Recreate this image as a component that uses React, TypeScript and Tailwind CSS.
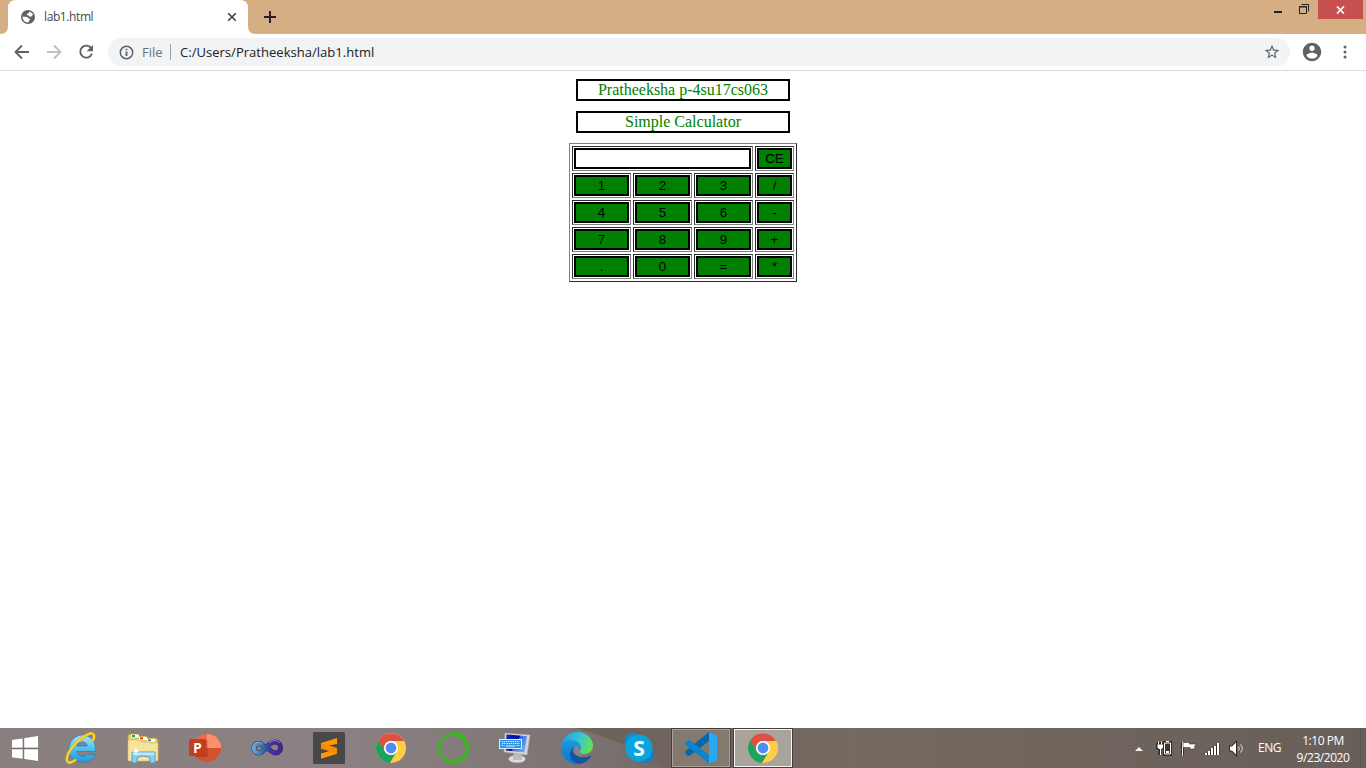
import type { ReactNode } from "react";

const ui = "font-['Open_Sans','Noto_Sans',sans-serif]";

function TabStrip() {
  return (
    <div className="flex h-[34px] items-end bg-[#d5af83]">
      <svg width="256" height="34" viewBox="0 0 256 34" className="absolute top-0 left-0">
        <path d="M0 34Q8 34 8 26V8Q8 0 16 0H240Q248 0 248 8V26Q248 34 256 34Z" fill="#fff" />
      </svg>
      <div className="relative flex h-[34px] w-[248px] items-center pl-[20px]">
        <svg width="16" height="16" viewBox="0 0 16 16">
          <circle cx="8" cy="8" r="7" fill="#5f6368" />
          <path d="M9 2.400Q12 3 13.300 5.800L12.300 6.300Q11.500 8 9.800 7.800Q9.200 6.200 7.500 6.300Q6.200 5.500 7.200 4.500L9 4.200Z" fill="#fff" />
          <path d="M2.400 7.800H5.500Q8.500 7.800 8.500 9.500Q10.500 9.500 10.300 11Q8.800 11 8.500 13.400Q3 13.800 2.400 7.800Z" fill="#fff" />
        </svg>
        <span className={`${ui} ml-[8px] w-[183px] text-[12px] leading-4 tracking-[-0.4px] text-[#45484c]`}>lab1.html</span>
        <svg width="12" height="12" viewBox="0 0 12 12" className="-ml-px" stroke="#3c4043" strokeWidth="1.600">
          <path d="M2.200 2.200l7.600 7.600M9.800 2.200l-7.600 7.600" />
        </svg>
      </div>
      <div className="relative flex h-[34px] w-[44px] items-center justify-center">
        <svg width="14" height="14" viewBox="0 0 14 14" stroke="#202124" strokeWidth="2">
          <path d="M7 1v12M1 7h12" />
        </svg>
      </div>
      <div className="ml-auto flex h-[34px] items-start pr-[3px]">
        <svg width="50" height="20" viewBox="0 0 50 20" fill="none" stroke="#222">
          <path d="M6 12h8" strokeWidth="2" />
          <path d="M31.500 6.500h7v7h-7zM31 7h8M33.500 4.500h7v7" strokeWidth="1" />
        </svg>
        <div className="flex h-[19px] w-[45px] items-center justify-center bg-[#c75050]">
          <svg width="9" height="8" viewBox="0 0 9 8" stroke="#fff" strokeWidth="1.700">
            <path d="M1 .5l7 7M8 .5l-7 7" />
          </svg>
        </div>
      </div>
    </div>
  );
}

function Toolbar() {
  return (
    <div className="flex h-[37px] items-center border-b border-[#dadce0] bg-white">
      <svg width="108" height="36" viewBox="0 0 108 36" fill="none" strokeWidth="1.900">
        <path d="M29 18H16M22 11.500L15.500 18l6.500 6.500" stroke="#5f6368" />
        <path d="M47 18h13M54 11.500l6.500 6.500-6.500 6.500" stroke="#bdc1c6" />
        <path d="M91.200 14.200A6 6 0 1 0 91.900 19.700" stroke="#5f6368" />
        <path d="M93 11v6.300h-6.300z" fill="#5f6368" />
      </svg>
      <div className={`${ui} flex h-7 w-[1182px] items-center rounded-full bg-[#f1f3f4] pl-[11px] text-[13px] text-[#202124]`}>
        <svg width="15" height="15" viewBox="0 0 15 15" fill="none" stroke="#5f6368" strokeWidth="1.500">
          <circle cx="7.500" cy="7.500" r="6.200" />
          <path d="M7.500 6.500v4.500M7.500 3.700v1.500" strokeWidth="1.800" />
        </svg>
        <span className="ml-[8px] w-[28px] pt-px text-[#6d7175]">File</span>
        <span className="h-4 w-px bg-[#9aa0a6]" />
        <span className="ml-[9px] pt-px tracking-[0.03px] whitespace-nowrap">C:/Users/Pratheeksha/lab1.html</span>
        <svg width="16" height="16" viewBox="1 1 22 22" className="mr-[10px] ml-auto" fill="#5f6368">
          <path d="M22 9.240l-7.190-.62L12 2 9.190 8.630 2 9.240l5.460 4.730L5.820 21 12 17.270 18.180 21l-1.630-7.030L22 9.240zM12 15.400l-3.760 2.270 1-4.280-3.320-2.880 4.380-.38L12 6.100l1.710 4.040 4.380.38-3.320 2.880 1 4.280L12 15.400z" />
        </svg>
      </div>
      <svg width="22" height="22" viewBox="0 0 24 24" className="ml-[11px]" fill="#5f6368">
        <path d="M12 2C6.480 2 2 6.480 2 12s4.480 10 10 10 10-4.480 10-10S17.520 2 12 2zm0 3c1.660 0 3 1.340 3 3s-1.340 3-3 3-3-1.340-3-3 1.340-3 3-3zm0 14.200c-2.500 0-4.710-1.280-6-3.220.03-1.990 4-3.080 6-3.080 1.990 0 5.970 1.090 6 3.080-1.290 1.940-3.500 3.220-6 3.220z" />
      </svg>
      <svg width="4" height="16" viewBox="0 0 4 16" className="ml-[20px]" fill="#5f6368">
        <circle cx="2" cy="3" r="1.500" />
        <circle cx="2" cy="8" r="1.500" />
        <circle cx="2" cy="13" r="1.500" />
      </svg>
    </div>
  );
}

const rows = [
  ["1", "2", "3", "/"],
  ["4", "5", "6", "-"],
  ["7", "8", "9", "+"],
  [".", "0", "=", "*"],
];

function Cell({ wide, children }: { wide?: boolean; children: ReactNode }) {
  return (
    <div className={`${wide ? "col-span-3" : ""} h-[25px] border border-t-[#2c2c2c] border-r-[#808080] border-b-[#808080] border-l-[#2c2c2c] p-px`}>
      {children}
    </div>
  );
}

function Key({ label }: { label: string }) {
  return (
    <button className="flex h-[21px] w-full items-center justify-center border-2 border-black bg-[#008000] font-['Liberation_Sans',Arial,sans-serif] text-[13.333px] leading-[15px] text-black">
      {label}
    </button>
  );
}

function Calculator() {
  return (
    <main className="flex flex-1 flex-col items-center bg-white pt-2">
      <div className="flex h-[22px] w-[214px] items-center justify-center border-2 border-black font-['Liberation_Serif',serif] text-[16px] leading-[18px] text-[#008000]">
        Pratheeksha p-4su17cs063
      </div>
      <div className="mt-[10px] flex h-[22px] w-[214px] items-center justify-center border-2 border-black font-['Liberation_Serif',serif] text-[16px] leading-[18px] text-[#008000]">
        Simple Calculator
      </div>
      <div className="mt-[10px] grid w-[228px] grid-cols-[59px_59px_59px_39px] gap-[2px] border border-t-[#808080] border-r-[#2c2c2c] border-b-[#2c2c2c] border-l-[#808080] p-[2px]">
        <Cell wide>
          <input className="block h-[21px] w-full border-2 border-black bg-white outline-none" />
        </Cell>
        <Cell>
          <Key label="CE" />
        </Cell>
        {rows.flat().map((k) => (
          <Cell key={k}>
            <Key label={k} />
          </Cell>
        ))}
      </div>
    </main>
  );
}

function IE() {
  return (
    <svg width="32" height="34" viewBox="0 0 32 34" fill="none">
      <defs>
        <linearGradient id="ie" x1="0" y1="0" x2="0" y2="1">
          <stop stopColor="#a4e6fb" />
          <stop offset=".5" stopColor="#52c0ee" />
          <stop offset="1" stopColor="#209ad8" />
        </linearGradient>
      </defs>
      <path d="M30.500 20.500H12C12.500 25.500 20 27 22 23.500H30C27.500 29.500 22.500 31.500 17 31.200C9 31 3.500 25.500 3.700 18.500C3.900 10.500 10 4 17.500 4C25.500 4 31.500 11 30.500 20.500ZM12 15H22.300C21.500 9.700 13 9.600 12 15Z" fill="url(#ie)" stroke="#2187bc" strokeWidth=".8" />
      <path d="M27.500 10C31 4.500 28.500.5 22.500 3.500C12 8.500.5 22.500 2 29.500C3 33.500 8 31 11 28.500" stroke="#c8921b" strokeWidth="3" />
      <path d="M27.500 10C31 4.500 28.500.5 22.500 3.500C12 8.500.5 22.500 2 29.500C3 33.500 8 31 11 28.500" stroke="#fad437" strokeWidth="2.200" />
    </svg>
  );
}

function Explorer() {
  return (
    <svg width="32" height="32" viewBox="0 0 32 32">
      <path d="M1 3l2-1h7l1 2h8l2 2h8l2 2v20l-1 1H2l-1-1z" fill="#e7ca73" stroke="#b59743" strokeWidth=".7" />
      <path d="M4 2.500h8v3H4zM12 5h8v3h-8zM20 7h8v3h-8z" fill="#fffbe5" />
      <path d="M5 3h3v2H5z" fill="#15b32b" />
      <path d="M13 5.300h3v2h-3z" fill="#db3b24" />
      <path d="M21 7.300h3v2h-3z" fill="#278bdb" />
      <path d="M1 8h11l2 2h8l1 1h8v17l-1 1H2l-1-1z" fill="#f6e39a" stroke="#cfb361" strokeWidth=".5" />
      <path d="M5 20h23v11h-5v-5q-6.500-4-13 0v5H5z" fill="#8acdeb" stroke="#4b9ec9" />
      <path d="M5.500 20.500h22v2.500H5.500z" fill="#c0e7f7" />
      <path d="M9 14l.8 4 3.200 1-3.200 1L9 24l-.8-4L5 19l3.200-1z" fill="#fff" />
    </svg>
  );
}

function PowerPoint() {
  return (
    <svg width="32" height="30" viewBox="0 0 32 30">
      <circle cx="18" cy="15" r="14" fill="#ed6c47" />
      <path d="M18 1a14 14 0 0 1 14 14H18z" fill="#ff8f6b" />
      <path d="M4 15h28a14 14 0 0 1-28 0z" fill="#d35230" />
      <path d="M4 7h13q1.500 0 1.500 1.500V24H6z" fill="#7f2412" opacity=".35" />
      <rect y="6" width="17" height="17" rx="1.500" fill="#c43e1c" />
      <text x="8.500" y="19.500" textAnchor="middle" fill="#fff" fontFamily="Open Sans" fontWeight="700" fontSize="14">P</text>
    </svg>
  );
}

function VisualStudio() {
  return (
    <svg width="32" height="20" viewBox="0 0 32 20" fill="none">
      <defs>
        <linearGradient id="vs" gradientUnits="userSpaceOnUse" x1="0" x2="32" y1="0" y2="0">
          <stop stopColor="#72b9e8" />
          <stop offset=".45" stopColor="#285b9f" />
          <stop offset=".65" stopColor="#5425aa" />
          <stop offset="1" stopColor="#48208c" />
        </linearGradient>
      </defs>
      <path d="M15 10.500C12 7 10 5.500 7.500 5.500C1.500 6 1.500 14.500 7.500 15C14 15 16 4 24 4C31 4 31.500 14.500 25 15C21.500 15 19 12.500 16.500 10" stroke="#293465" strokeWidth="5" />
      <path d="M15 10.500C12 7 10 5.500 7.500 5.500C1.500 6 1.500 14.500 7.500 15C14 15 16 4 24 4C31 4 31.500 14.500 25 15C21.500 15 19 12.500 16.500 10" stroke="url(#vs)" strokeWidth="4" />
      <path d="M3 6.500Q7 2.500 12 6M18 5Q24 0 29 5" stroke="#9cc6ee" strokeWidth="1" opacity=".6" />
    </svg>
  );
}

function Sublime() {
  return (
    <svg width="32" height="32" viewBox="0 0 32 32">
      <rect width="32" height="32" rx="1.500" fill="#484848" />
      <path d="M24 12V6L8 11v5.500l8.500 2.500L8 21.500v5.200l16-5V16l-8.500-2.500z" fill="#ff9800" />
      <path d="M8 11.200v5.300l16 5V16l-8.500-2.500z" fill="#f58a00" />
    </svg>
  );
}

function Chrome() {
  return (
    <svg width="30" height="30" viewBox="0 0 30 30">
      <circle cx="15" cy="15" r="15" fill="#ffcd46" />
      <path d="M2 7.500A15 15 0 0 1 28 8H15a7 7 0 0 0-6 10.500z" fill="#dd5144" />
      <path d="M2.300 7A15 15 0 0 0 13.800 30L20.500 19a7 7 0 0 1-11.700-.8z" fill="#1ca261" />
      <circle cx="15" cy="15" r="7" fill="#fff" />
      <circle cx="15" cy="15" r="5.400" fill="#4d8bf5" />
    </svg>
  );
}

function Anaconda() {
  return (
    <svg width="34" height="34" viewBox="0 0 34 34" fill="none" stroke="#43b02a">
      <path d="M17.500 3A14 14 0 1 1 8 27.500" strokeWidth="4.300" />
      <path d="M17.500 3A14 14 0 0 0 8 27.500" strokeWidth="4.500" strokeDasharray="2.700 1" />
      <path d="M14.500 2A15.500 15.500 0 0 0 5.500 28" strokeWidth="1.700" stroke="#8a8082" strokeDasharray="1.500 2.500" />
      <path d="M17 5.500A12 12 0 0 0 8.500 25" strokeWidth="1.300" stroke="#8a8082" strokeDasharray="1.500 2" />
    </svg>
  );
}

function Keyboard() {
  return (
    <svg width="32" height="32" viewBox="0 0 32 32">
      <defs>
        <linearGradient id="scr" x1="0" x2="1" y1="0" y2=".5">
          <stop stopColor="#1226c8" />
          <stop offset=".55" stopColor="#0008a0" />
          <stop offset=".6" stopColor="#3964e5" />
          <stop offset="1" stopColor="#6aa5f5" />
        </linearGradient>
      </defs>
      <ellipse cx="18" cy="27" rx="8.500" ry="3.800" fill="#ddd" stroke="#aaa" strokeWidth=".6" />
      <path d="M15 20h7l1 8h-9z" fill="#bcbcbc" />
      <path d="M6 1l25 2-3 20L5 20z" fill="#d8d7d1" stroke="#aaa" strokeWidth=".6" />
      <path d="M7.500 2.500l20.500 1.700-2.500 16L7 18.500z" fill="url(#scr)" />
      <rect x=".5" y="7.500" width="22" height="9" fill="#3296df" stroke="#dcecf8" />
      <path d="M2.500 9.500h18M3 11.500h18M2.500 13.500h3M17.500 13.500h3" stroke="#e4f3fd" strokeDasharray="1.300 .9" />
      <path d="M7 14h9" stroke="#e4f3fd" />
    </svg>
  );
}

function Edge() {
  return (
    <svg width="32" height="32" viewBox="0 0 32 32">
      <defs>
        <linearGradient id="eg" x1="0" x2="1" y1=".3" y2=".6">
          <stop stopColor="#1a9fe0" />
          <stop offset=".5" stopColor="#32c5d8" />
          <stop offset="1" stopColor="#68e24a" />
        </linearGradient>
        <linearGradient id="eb" x1="0" x2="0" y1="0" y2="1">
          <stop stopColor="#2398dd" />
          <stop offset="1" stopColor="#0876cc" />
        </linearGradient>
      </defs>
      <path d="M0 15C1 6 8 0 16 0c9 0 16 6 16 13.500 0 5-4 8.500-8.500 8.500-4 0-5.700-1.700-5-3 .9-1 1.200-2 1.200-3.300C19.700 10.500 14 7.500 8.500 8.500 4 9.300 1 12 0 15z" fill="url(#eg)" />
      <path d="M0 16c0-5.500 4-8.200 9-8.200 6.500 0 10.700 4 10.700 8.200 0 1.500-.8 2.700-1.200 3-1-3-7-4-7.500 2-.5 6 4 10 8 10.600C9 33.500 0 26 0 16z" fill="url(#eb)" />
      <path d="M13 14.500c-6 4-5.500 15 5 17.300 5 0 9.500-3.300 12-7.300.5-.8-.2-1.300-1-.8-7 3.600-15 .8-17-3.700-1-2 0-4.500 1-5.500z" fill="#1254a0" />
      <path d="M14.500 14.500q-3 2.500-1 6 1.500 2.500 4.500 3.500l6-1.500q-5.500-.5-5.500-2.500 1-1 1-3-1.500-3-5-2.500z" fill="#8a8280" />
    </svg>
  );
}

function Skype() {
  return (
    <svg width="30" height="32" viewBox="0 0 30 32">
      <circle cx="9" cy="9.500" r="8.500" fill="#0a8cd6" />
      <circle cx="21" cy="22.500" r="8.500" fill="#0b7fd0" />
      <circle cx="15" cy="16" r="13.500" fill="#08a4e2" />
      <text x="15" y="23.500" textAnchor="middle" fill="#fff" fontFamily="Open Sans" fontWeight="700" fontSize="21">S</text>
    </svg>
  );
}

function VSCode() {
  return (
    <svg width="32" height="32" viewBox="0 0 32 32">
      <path d="M24 0v9L5 23.500q-1.500 1-2.500 0L.6 21.500q-1-1.300 0-2.500z" fill="#0068ad" />
      <path d="M24 31.500V23L5 8.500q-1.500-1-2.500 0L.6 10.500q-1 1.300 0 2.500z" fill="#0b83cf" />
      <path d="M24 0l7 3q1 .5 1 1.500v23q0 1-1 1.500l-7 2.700z" fill="#28a9f1" />
    </svg>
  );
}

function TaskButton({ children, frame = "" }: { children: ReactNode; frame?: string }) {
  return (
    <div className="flex h-10 w-[62px] items-center justify-center">
      <div className={`flex h-10 w-[60px] items-center justify-center ${frame}`}>{children}</div>
    </div>
  );
}

function Tray() {
  return (
    <svg width="112" height="40" viewBox="0 0 112 40" fill="none">
      <path d="M4 23l4-4 4 4z" fill="#f5f5f5" />
      <g stroke="#302b29" strokeWidth="3">
        <path d="M26.500 17h5v3h-5zM29 20v7M27.500 14v3M30.500 14v3M33.500 14.500h6v12h-6zM51.500 14v13M75 25v2M78 23v4M81 20v7M84 18v9M87 15v12" />
        <path d="M99 18.500h2l4-4v12l-4-4h-2z" strokeWidth="2" />
      </g>
      <path d="M33.500 15h6v11h-6z" fill="#3b3633" stroke="#fff" />
      <path d="M35 13.500h3" stroke="#fff" />
      <path d="M35 23h3v2h-3z" fill="#fff" />
      <path d="M26.500 16.500h5.500v3l-1.500 1.500h-2.500l-1.500-1.500z" fill="#fff" />
      <path d="M29.500 20v7M27.500 13.500v3M30.500 13.500v3M51.500 13.500v14" stroke="#fff" />
      <path d="M52 14.500h6.500v1.500h6.500l-1.500 2.500.5 2.500h-5v-1.500H52z" fill="#fff" stroke="#403936" strokeWidth=".6" />
      <path d="M75 25v2M78 23v4M81 20v7M84 18v9M87 15v12" stroke="#fff" strokeWidth="2" />
      <path d="M99 18.500h2l4-4v12l-4-4h-2z" fill="#fff" />
      <path d="M107.500 18.500q1.500 2 0 4M109.500 16.500q3.500 4 0 8" stroke="#e5e5e5" />
    </svg>
  );
}

function Taskbar() {
  return (
    <div className="relative h-10 overflow-hidden bg-[linear-gradient(90deg,#897f7e_0px,#8b8182_350px,#7a7272_600px,#6d635a_700px,#756a61_850px,#71665d_1000px,#685f5a_1366px)]">
      <svg width="210" height="40" viewBox="0 0 210 40" className="absolute top-0 left-[460px]">
        <defs>
          <linearGradient id="hill" x1="0" x2="1" y1="0" y2="0">
            <stop stopColor="#6a5d52" stopOpacity=".75" />
            <stop offset=".6" stopColor="#6a5e53" stopOpacity=".7" />
            <stop offset="1" stopColor="#6d635a" stopOpacity=".4" />
          </linearGradient>
        </defs>
        <path d="M116 0Q172 16 206 40H210V0z" fill="url(#hill)" />
      </svg>
      <div className="relative flex h-10 items-center">
        <div className="flex w-[50px] justify-center">
          <svg width="28" height="27" viewBox="0 0 28 27" fill="#fff" stroke="#675f5e" strokeWidth=".6">
            <path d="M.5 4.500L12 3v10H.5zM12.800 2.800L27.500.5V13H12.800zM.5 13.900h11.500v10.300L.5 22.700zM12.800 13.900h14.700V26.500l-14.700-2.200z" />
          </svg>
        </div>
        <TaskButton><IE /></TaskButton>
        <TaskButton><Explorer /></TaskButton>
        <TaskButton><PowerPoint /></TaskButton>
        <TaskButton><VisualStudio /></TaskButton>
        <TaskButton><Sublime /></TaskButton>
        <TaskButton><Chrome /></TaskButton>
        <TaskButton><Anaconda /></TaskButton>
        <TaskButton><Keyboard /></TaskButton>
        <TaskButton><Edge /></TaskButton>
        <TaskButton><Skype /></TaskButton>
        <TaskButton frame="border border-[#443d38] bg-[#83796f] shadow-[inset_0_0_0_1px_#aaa39b]"><VSCode /></TaskButton>
        <TaskButton frame="border border-[#443d38] bg-[#a9a39d] shadow-[inset_0_0_0_1px_#f6f5f3]"><Chrome /></TaskButton>
        <div className={`${ui} ml-auto flex h-10 items-center text-[12px] text-white`}>
          <Tray />
          <span className="ml-[15px] w-[23px] text-[12px] tracking-[-0.5px]">ENG</span>
          <div className="ml-[13px] w-[58px] pt-px text-center leading-[17px] tracking-[-0.45px] whitespace-nowrap">
            <div>1:10 PM</div>
            <div>9/23/2020</div>
          </div>
          <span className="ml-[8px] h-10 w-[6px] border-l border-[#5b534f]" />
        </div>
      </div>
    </div>
  );
}

export default function App() {
  return (
    <div className="relative flex h-screen w-full flex-col overflow-hidden bg-white">
      <TabStrip />
      <Toolbar />
      <Calculator />
      <Taskbar />
    </div>
  );
}
